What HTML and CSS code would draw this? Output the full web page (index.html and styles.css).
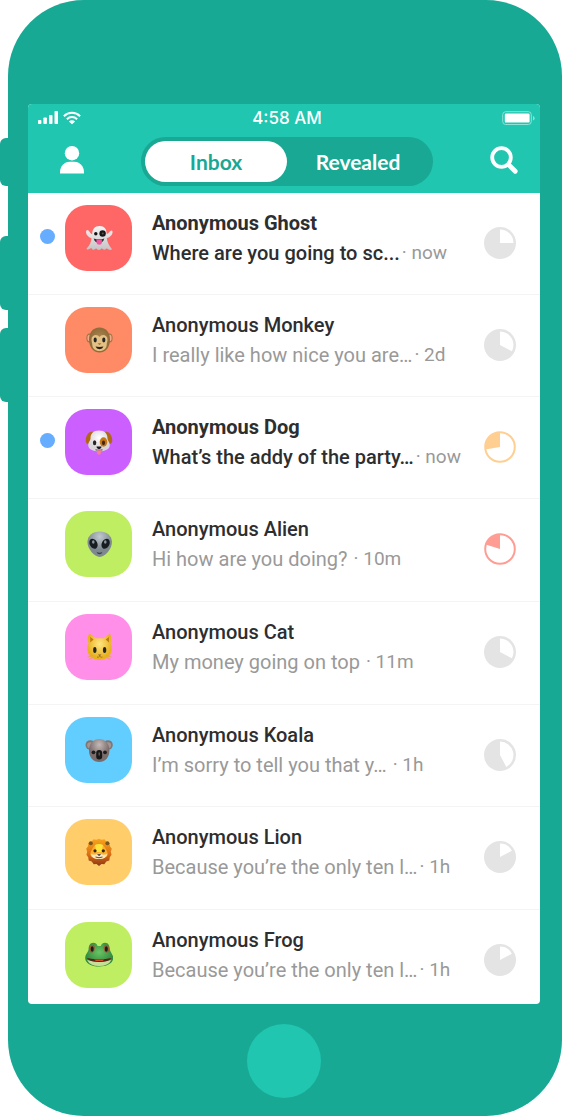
FILE: index.html
```html
<!DOCTYPE html>
<html lang="en">
<head>
<meta charset="utf-8">
<meta name="viewport" content="width=device-width, initial-scale=1">
<title>Inbox</title>
<link rel="stylesheet" href="styles.css">
</head>
<body>
<div class="phone">
  <span class="side-key side-key--mute"></span>
  <span class="side-key side-key--up"></span>
  <span class="side-key side-key--down"></span>

  <main class="screen">
    <header class="header">
      <div class="status">
        <div class="status__signal">
          <svg width="20" height="14" viewBox="0 0 20 14" fill="#fff"><rect x="0" y="9" width="3.4" height="4" rx=".8"/><rect x="5.4" y="6.500" width="3.500" height="6.500" rx=".8"/><rect x="11" y="4" width="3.500" height="9" rx=".8"/><rect x="16.500" y="0" width="3.500" height="13" rx=".8"/></svg>
          <svg width="18" height="14" viewBox="0 0 18 14" fill="none" stroke="#fff" stroke-width="2"><path d="M.9 5.200a11.500 11.500 0 0 1 16.200 0M3.900 8.200a7.300 7.300 0 0 1 10.200 0"/><path d="M9 13.300 5.800 10.500a4.600 4.600 0 0 1 6.400 0z" fill="#fff" stroke="none"/></svg>
        </div>
        <span class="status__time">4:58 AM</span>
        <svg class="status__battery" width="34" height="14" viewBox="0 0 34 14"><rect x=".7" y=".7" width="28.600" height="12.800" rx="3" fill="none" stroke="#8fe2d7"/><rect x="2.800" y="2.600" width="24.800" height="9" rx="1.200" fill="#fff"/><path d="M31 5v4.500q1.600-.6 1.600-2.250T31 5z" fill="#8fe2d7"/></svg>
      </div>
      <div class="toolbar">
        <button class="icon-button" type="button" aria-label="Profile">
          <svg width="24" height="28" viewBox="0 0 24 28" fill="#fff"><circle cx="12" cy="7.200" r="7.200"/><path d="M0 27.500v-1.500C0 20 4.500 15.700 9.500 15.700h5C19.500 15.700 24 20 24 26v1.500z"/></svg>
        </button>
        <div class="tabs">
          <button class="tab tab--active" type="button">Inbox</button>
          <button class="tab" type="button">Revealed</button>
        </div>
        <button class="icon-button" type="button" aria-label="Search">
          <svg width="28" height="28" viewBox="0 0 28 28" fill="none" stroke="#fff"><circle cx="11.500" cy="11.500" r="9.300" stroke-width="3.800"/><path d="m18.600 18.600 6.600 6.600" stroke-width="4.800" stroke-linecap="round"/></svg>
        </button>
      </div>
    </header>

    <ul class="messages">
      <li class="message message--unread">
        <span class="message__dot"></span>
        <span class="avatar avatar--red">
          <svg class="emoji" viewBox="0 0 28 28"><defs><linearGradient id="ghost" x1="0" x2="0" y1="0" y2="1"><stop offset="0" stop-color="#f4f4f4"/><stop offset="1" stop-color="#c4c4c6"/></linearGradient></defs><path d="M14.500 2c-4.800 0-7.300 3.300-7.300 8.200C5 9.700 4.300 6.200 2.500 6 .5 6 .7 9.200 2.200 11.300c1.200 1.700 2.700 2.500 4.300 3-.4 4-1.600 7-4.800 10.200-.5 1 .8 1.300 2 .7l2.600-1.300c1.400 2.500 3.400 2.200 4.800.4 1.600 2.300 4 2.300 5.600 0 1.800 1.800 3.600 2 5 0 1.800 1.500 3.600 2.300 5 1.300.5-.7-.4-1.200-1-2-2.500-3.200-3.600-6.400-3.900-9.500 1.800-.6 3.700-1.600 4.800-3.200 1.400-2.100 1.300-4.300.1-4.500-1.700-.2-2.700 3-5 3.600C21.700 5.200 19.500 2 14.500 2z" fill="url(#ghost)"/><circle cx="10.800" cy="9.800" r="1.700" fill="#111"/><circle cx="17.600" cy="9.500" r="3.200" fill="#171717"/><circle cx="17.800" cy="9.500" r="1" fill="#555"/><path d="M8.700 14.500q5.500 1.700 10.600 0-1 4.300-5.300 4.300t-5.300-4.300z" fill="#333"/><path d="M11.500 15.500h5.400v3q0 2.300-2.600 2.300t-2.800-2.300z" fill="#f2559f"/></svg>
        </span>
        <div class="message__body"><h2 class="message__name">Anonymous Ghost</h2><p class="message__line"><span class="message__text">Where are you going to sc...</span><span class="message__time">· now</span></p></div>
        <svg class="timer" viewBox="0 0 32 32"><circle class="timer__disc" cx="16" cy="16" r="16"/><path class="timer__gap" d="M16 16V2.500A13.500 13.500 0 0 1 29.500 16z"/></svg>
      </li>
      <li class="message">
        <span class="message__dot"></span>
        <span class="avatar avatar--orange">
          <svg class="emoji" viewBox="0 0 28 28"><defs><radialGradient id="monkey"><stop offset="0" stop-color="#b38b51"/><stop offset="1" stop-color="#8f6b39"/></radialGradient></defs><ellipse cx="4.600" cy="12" rx="3.200" ry="4.600" fill="#9a7444"/><ellipse cx="24.400" cy="12" rx="3.200" ry="4.600" fill="#9a7444"/><ellipse cx="4.400" cy="12" rx="2" ry="3.200" fill="#f0a98c"/><ellipse cx="24.600" cy="12" rx="2" ry="3.200" fill="#f0a98c"/><path d="M14.500 1.500C7.800 1.500 4 6.500 4 13.500S8 26.500 14.500 26.500 25 20.500 25 13.500 21.200 1.500 14.500 1.500z" fill="url(#monkey)"/><path d="M14.500 11c-2-3.500-8-2.500-8 2.500 0 2.200.8 3.200.8 5 0 4 3 6.500 7.200 6.500s7.200-2.500 7.200-6.500c0-1.800.8-2.800.8-5 0-5-6-6-8-2.500z" fill="#e3c184"/><ellipse cx="10.200" cy="14" rx="1.600" ry="2.400" fill="#252525"/><ellipse cx="18.800" cy="14" rx="1.600" ry="2.400" fill="#252525"/><path d="M12.600 17.500h3.800l-1.900 1.300z" fill="#725235"/><path d="M10.500 20.600q4 .8 8 0-1 2.600-4 2.600t-4-2.600z" fill="#302018"/></svg>
        </span>
        <div class="message__body"><h2 class="message__name">Anonymous Monkey</h2><p class="message__line"><span class="message__text">I really like how nice you are…</span><span class="message__time">· 2d</span></p></div>
        <svg class="timer" viewBox="0 0 32 32"><circle class="timer__disc" cx="16" cy="16" r="16"/><path class="timer__gap" d="M16 16V2.500A13.500 13.500 0 0 1 27.900 22.300z"/></svg>
      </li>
      <li class="message message--unread">
        <span class="message__dot"></span>
        <span class="avatar avatar--purple">
          <svg class="emoji" viewBox="0 0 28 28"><defs><radialGradient id="dog" cx=".5" cy=".35"><stop offset="0" stop-color="#fff"/><stop offset="1" stop-color="#d8d4da"/></radialGradient></defs><path d="M8 4C3.500 3 1 8 .7 12c-.2 3 1.300 4.700 3.800 3.500L9 8zM20 4c4.500-1 7 4 7.300 8 .2 3-1.300 4.700-3.800 3.500L19 8z" fill="#b16713"/><path d="M14 2.500C8 2.500 5.500 6 5.500 10.500c0 2-2.300 3.500-2.300 6.500 0 4.500 5 6.300 10.800 6.300S24.800 21.500 24.800 17c0-3-2.300-4.500-2.300-6.500C22.500 6 20 2.500 14 2.500z" fill="url(#dog)"/><ellipse cx="18.500" cy="14" rx="3.800" ry="4.700" fill="#c47713"/><ellipse cx="9.600" cy="14.800" rx="1.700" ry="2.500" fill="#292326"/><ellipse cx="18.500" cy="14.800" rx="1.600" ry="2.400" fill="#432713"/><path d="M11.500 18.600h5q.5 1.600-2.500 3-3-1.400-2.500-3z" fill="#19161b"/><path d="M10.500 21.800q3.500 1.200 7 0" stroke="#56464e" fill="none"/><path d="M12 22.300h4v1.500q0 3-2 3t-2-3z" fill="#fa7e91"/></svg>
        </span>
        <div class="message__body"><h2 class="message__name">Anonymous Dog</h2><p class="message__line"><span class="message__text">What’s the addy of the party…</span><span class="message__time">· now</span></p></div>
        <svg class="timer timer--amber" viewBox="0 0 32 32"><circle class="timer__ring" cx="16" cy="16" r="14.800"/><path class="timer__slice" d="M16 16 1.200 18.600A15 15 0 0 1 16 1z"/></svg>
      </li>
      <li class="message">
        <span class="message__dot"></span>
        <span class="avatar avatar--lime">
          <svg class="emoji" viewBox="0 0 28 28"><defs><radialGradient id="alien" cx=".5" cy=".2"><stop offset="0" stop-color="#c1c9ce"/><stop offset="1" stop-color="#7d888f"/></radialGradient></defs><path d="M14.700 1.500C7.800 1.500 3 5.400 2.500 11.500c-.5 7 7 15.500 12.200 15.500S27.400 18.500 26.900 11.500C26.400 5.400 21.600 1.500 14.700 1.500z" fill="url(#alien)"/><ellipse cx="8.500" cy="13.700" rx="3.800" ry="5.300" transform="rotate(-28 8.500 13.700)" fill="#171c20"/><ellipse cx="20.600" cy="13.700" rx="3.800" ry="5.300" transform="rotate(28 20.600 13.700)" fill="#171c20"/><ellipse cx="8.300" cy="12" rx="1.300" ry="1.800" fill="#89949b"/><ellipse cx="20.300" cy="12" rx="1.300" ry="1.800" fill="#89949b"/><path d="M11.500 21.700q3 2.200 6 0-.8 2.500-3 2.500t-3-2.500z" fill="#35424a"/></svg>
        </span>
        <div class="message__body"><h2 class="message__name">Anonymous Alien</h2><p class="message__line message__line--wide"><span class="message__text">Hi how are you doing?</span><span class="message__time">· 10m</span></p></div>
        <svg class="timer timer--coral" viewBox="0 0 32 32"><circle class="timer__ring" cx="16" cy="16" r="14.800"/><path class="timer__slice" d="M16 16 1.700 11.600A15 15 0 0 1 16 1z"/></svg>
      </li>
      <li class="message">
        <span class="message__dot"></span>
        <span class="avatar avatar--pink">
          <svg class="emoji" viewBox="0 0 28 28"><defs><radialGradient id="cat" cx=".5" cy=".4"><stop offset="0" stop-color="#ffe783"/><stop offset="1" stop-color="#e9b120"/></radialGradient></defs><path d="M4.300.5 11 5.300h7.500L25 .5q2 4.500.7 10c1 2.500 1.300 5 1 7-1 6-5.500 9.500-12 9.500S3.300 23.500 2.500 17.500c-.3-2 0-4.500 1-7C2.300 5 2.800 3 4.300.5z" fill="url(#cat)"/><path d="m5.200 4 3.400 2.400-3.400 3zM24 4l-3.400 2.400L24 9.400z" fill="#c27c12"/><ellipse cx="9.800" cy="17" rx="1.700" ry="3" fill="#262721"/><ellipse cx="19.600" cy="17" rx="1.700" ry="3" fill="#262721"/><path d="M12.900 21.500h3.600l-1.800 1.800z" fill="#945e43"/><path d="M12 24.100q1.400.6 2.700-.8 1.300 1.400 2.700.8" fill="none" stroke="#987122" stroke-width=".9"/><path d="m8 22.500-5.500 1.500M8 24.500l-4.500 2M21.500 22.500l5 1.500M21.500 24.500l4 2" stroke="#dca53d" stroke-width=".7"/></svg>
        </span>
        <div class="message__body"><h2 class="message__name">Anonymous Cat</h2><p class="message__line message__line--wide"><span class="message__text">My money going on top</span><span class="message__time">· 11m</span></p></div>
        <svg class="timer" viewBox="0 0 32 32"><circle class="timer__disc" cx="16" cy="16" r="16"/><path class="timer__gap" d="M16 16V2.500A13.500 13.500 0 0 1 27.900 22.300z"/></svg>
      </li>
      <li class="message">
        <span class="message__dot"></span>
        <span class="avatar avatar--sky">
          <svg class="emoji" viewBox="0 0 28 28"><defs><radialGradient id="koala" cx=".5" cy=".25"><stop offset="0" stop-color="#c6bab8"/><stop offset="1" stop-color="#796c6b"/></radialGradient></defs><circle cx="5.300" cy="9" r="4.800" fill="#827674"/><circle cx="23" cy="9" r="4.800" fill="#827674"/><circle cx="5.200" cy="9.300" r="3" fill="#a29594"/><circle cx="23.100" cy="9.300" r="3" fill="#a29594"/><path d="M14.200 3C8.500 3 4 7.500 4 14.500c0 7 4.500 11.500 10.200 11.500s10.200-4.500 10.200-11.500C24.400 7.500 19.900 3 14.200 3z" fill="url(#koala)"/><circle cx="8.500" cy="16.300" r="1.900" fill="#1f1c1c"/><circle cx="20" cy="16.300" r="1.900" fill="#1f1c1c"/><rect x="11.200" y="14" width="6" height="9.500" rx="3" fill="#171717"/><path d="M14.200 16.500v3" stroke="#656565" stroke-width="1.200"/></svg>
        </span>
        <div class="message__body"><h2 class="message__name">Anonymous Koala</h2><p class="message__line message__line--wide"><span class="message__text">I’m sorry to tell you that y…</span><span class="message__time">· 1h</span></p></div>
        <svg class="timer" viewBox="0 0 32 32"><circle class="timer__disc" cx="16" cy="16" r="16"/><path class="timer__gap" d="M16 16V2.500A13.500 13.500 0 0 1 22.300 27.900z"/></svg>
      </li>
      <li class="message">
        <span class="message__dot"></span>
        <span class="avatar avatar--yellow">
          <svg class="emoji" viewBox="0 0 28 28"><defs><linearGradient id="lion" x1="0" x2="0" y1="0" y2="1"><stop offset="0" stop-color="#f8a51d"/><stop offset=".55" stop-color="#dd7115"/><stop offset="1" stop-color="#8e3514"/></linearGradient></defs><path d="m14 .8 2.500 1 3-.5 2 2.500 3 1 .5 3.500 1.800 2.500-1 3 .8 3-1.800 2.500-.5 3.200-3 1-2 2.700-2.800-.3L14 28l-2.500-2.100-2.800.3-2-2.700-3-1-.5-3.200-1.800-2.500.8-3-1-3 1.800-2.500.5-3.500 3-1 2-2.500 3 .5z" fill="url(#lion)"/><circle cx="5.800" cy="5.300" r="2" fill="#77551c"/><circle cx="22.400" cy="5.300" r="2" fill="#77551c"/><path d="M14 6c-4 0-5.500 2.500-7 5.500-1.500 2.500-2 4-1.500 5.500.8 2.500 4.500 4 8.500 4s7.700-1.500 8.500-4c.5-1.500 0-3-1.500-5.500-1.500-3-3-5.500-7-5.500z" fill="#ffb02a"/><path d="M10 7q4-2 8 0l-1.500 7h-5z" fill="#ffe43c"/><path d="M5.800 16q4 1.500 8.200-.5 4.200 2 8.200.5-1 5-8.200 5T5.800 16z" fill="#fbe8c4"/><circle cx="10" cy="12.800" r="1.600" fill="#35240f"/><circle cx="18.300" cy="12.800" r="1.600" fill="#35240f"/><path d="M12 16.200h4.200L14.100 18z" fill="#281e18"/><path d="M10.500 19q3.500 1.500 7 0" stroke="#754522" fill="none"/></svg>
        </span>
        <div class="message__body"><h2 class="message__name">Anonymous Lion</h2><p class="message__line"><span class="message__text">Because you’re the only ten l…</span><span class="message__time">· 1h</span></p></div>
        <svg class="timer" viewBox="0 0 32 32"><circle class="timer__disc" cx="16" cy="16" r="16"/><path class="timer__gap" d="M16 16V2.500A13.500 13.500 0 0 1 27.900 9.700z"/></svg>
      </li>
      <li class="message">
        <span class="message__dot"></span>
        <span class="avatar avatar--lime">
          <svg class="emoji" viewBox="0 0 28 28"><defs><radialGradient id="frog" cx=".5" cy=".4"><stop offset="0" stop-color="#69c464"/><stop offset="1" stop-color="#328b3e"/></radialGradient></defs><path d="M8.300 1.800c-3.200 0-4.600 3-4.700 6.200C3.500 11 .5 13 .2 16.500-.1 22 6 25.500 14.200 25.500S28.500 22 28.200 16.500c-.3-3.500-3.300-5.500-3.400-8.500-.1-3.200-1.500-6.200-4.700-6.200-2.500 0-3.700 1.600-4.300 3.300h-3.200c-.6-1.700-1.800-3.300-4.300-3.300z" fill="url(#frog)"/><ellipse cx="7" cy="7.700" rx="2.800" ry="4" transform="rotate(12 7 7.700)" fill="#9a6035"/><ellipse cx="21.500" cy="7.700" rx="2.800" ry="4" transform="rotate(-12 21.500 7.700)" fill="#9a6035"/><ellipse cx="7.200" cy="8" rx="1.500" ry="2.800" fill="#102119"/><ellipse cx="21.300" cy="8" rx="1.500" ry="2.800" fill="#102119"/><path d="M2 19q12.200 3.200 24.400 0-3 6-12.200 6T2 19z" fill="#c6df96"/><path d="M1.800 17q12.400 2.600 24.800 0-2.500 3.900-12.400 3.900T1.800 17z" fill="#592116"/><path d="M9 18.500h10.500l-2 1.500H11z" fill="#df482b"/></svg>
        </span>
        <div class="message__body"><h2 class="message__name">Anonymous Frog</h2><p class="message__line"><span class="message__text">Because you’re the only ten l…</span><span class="message__time">· 1h</span></p></div>
        <svg class="timer" viewBox="0 0 32 32"><circle class="timer__disc" cx="16" cy="16" r="16"/><path class="timer__gap" d="M16 16V2.500A13.500 13.500 0 0 1 27.900 9.700z"/></svg>
      </li>
    </ul>
  </main>
  <button class="home" type="button" aria-label="Home"></button>
</div>
</body>
</html>
```

FILE: styles.css
```css
* { box-sizing: border-box; }

body {
  margin: 0;
  background: #fff;
  font-family: Roboto, "Liberation Sans", sans-serif;
  color: #2d2e30;
}

button {
  border: 0;
  padding: 0;
  background: none;
  font: inherit;
  color: inherit;
  cursor: pointer;
}

svg { display: block; }

.phone {
  position: relative;
  margin-left: 8px;
  padding: 104px 22px 18px 20px;
  border-radius: 76px;
  background: #17a994;
  display: flex;
  flex-direction: column;
  align-items: center;
  gap: 20px;
}

/* hardware keys that stick out of the phone's left edge */
.side-key {
  position: absolute;
  left: -8px;
  width: 12px;
  height: 74px;
  border-radius: 6px 0 0 6px;
  background: #17a994;
}
.side-key--mute { top: 138px; height: 48px; }
.side-key--up { top: 236px; }
.side-key--down { top: 328px; }

.screen {
  align-self: stretch;
  border-radius: 4px;
  overflow: hidden;
  background: #fff;
}

.header { background: #20c6b0; padding-bottom: 7px; }

.status {
  display: grid;
  grid-template-columns: 1fr auto 1fr;
  align-items: center;
  height: 28px;
  padding: 0 4px 0 10px;
}
.status__signal { display: flex; gap: 5px; }
.status__time {
  font: 500 17px/28px Inter, "Liberation Sans", sans-serif;
  color: #fff;
}
.status__battery { justify-self: end; }

.toolbar {
  display: flex;
  align-items: center;
  justify-content: space-between;
  padding: 5px 22px 0 32px;
}
.icon-button { display: grid; place-items: center; padding-bottom: 4px; }

.tabs {
  display: grid;
  grid-template-columns: 1fr 1fr;
  width: 292px;
  height: 49px;
  padding: 4px;
  border-radius: 25px;
  background: #19a893;
}
.tab {
  border-radius: 21px;
  font: 700 21px/40px Lato, "Liberation Sans", sans-serif;
  color: #fff;
}
.tab--active { background: #fff; color: #19a893; }

.messages { list-style: none; margin: 0; padding: 0; }

.message {
  display: grid;
  grid-template-columns: 15px 67px 1fr 32px;
  align-items: start;
  height: 102px;
  padding: 12px 24px 0 12px;
  border-bottom: 1px solid #f4f4f4;
}
.message:nth-child(4),
.message:nth-child(5),
.message:nth-child(7) { height: 103px; }
.message:last-child { height: 94px; border-bottom: 0; }

.message__dot {
  width: 15px;
  height: 15px;
  margin-top: 24px;
  border-radius: 50%;
}
.message--unread .message__dot { background: #66adff; }

.avatar {
  display: grid;
  place-items: center;
  width: 67px;
  height: 66px;
  margin-left: 10px;
  border-radius: 22px;
}
.avatar--red { background: #ff6666; }
.avatar--orange { background: #ff8a66; }
.avatar--purple { background: #cc5fff; }
.avatar--lime { background: #c0ee62; }
.avatar--pink { background: #ff8fe8; }
.avatar--sky { background: #62ceff; }
.avatar--yellow { background: #ffce6a; }
.emoji { width: 28px; height: 28px; }

.message__body { padding: 3px 0 0 30px; white-space: nowrap; }
.message__name {
  margin: 0;
  font-size: 20px;
  line-height: 30px;
  font-weight: 500;
}
.message--unread .message__name { font-weight: 700; }
.message__line {
  display: flex;
  gap: 2px;
  margin: 0;
  font-size: 20px;
  line-height: 30px;
  color: #999;
}
.message__line--wide { gap: 6px; }
.message--unread .message__text { color: #2d2e30; font-weight: 500; }
.message__time { font-size: 19px; }

.timer { width: 32px; height: 32px; margin-top: 22px; }
.timer__disc { fill: #e4e4e4; }
.timer__gap { fill: #fff; }
.timer__ring { fill: none; stroke: currentColor; stroke-width: 2; }
.timer__slice { fill: currentColor; }
.timer--amber { color: #ffcf92; }
.timer--coral { color: #ff9d95; }

.home {
  width: 74px;
  height: 74px;
  border-radius: 50%;
  background: #20c6b0;
}
```
